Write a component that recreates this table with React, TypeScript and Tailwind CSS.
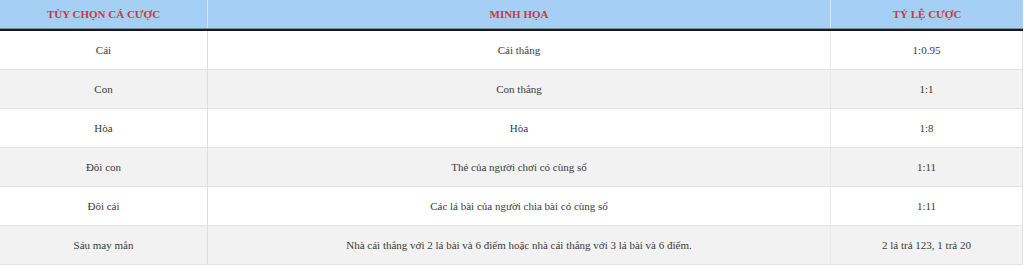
import React from "react";

const rows: [string, string, string][] = [
  ["Cái", "Cái thắng", "1:0.95"],
  ["Con", "Con thắng", "1:1"],
  ["Hòa", "Hòa", "1:8"],
  ["Đôi con", "Thẻ của người chơi có cùng số", "1:11"],
  ["Đôi cái", "Các lá bài của người chia bài có cùng số", "1:11"],
  ["Sáu may mắn", "Nhà cái thắng với 2 lá bài và 6 điểm hoặc nhà cái thắng với 3 lá bài và 6 điểm.", "2 lá trả 123, 1 trả 20"],
];

export default function App() {
  return (
    <div className="w-[1024px] h-[265px] bg-white overflow-hidden font-['Liberation_Serif','Times_New_Roman',serif]">
      <div className="w-[1023px] flex flex-col">
        <div className="grid grid-cols-[208px_623px_1fr] h-[28px] bg-[#a6cff5] text-[11px] font-bold text-[#d0353b] uppercase">
          <div className="flex items-center justify-center border-r border-[#d7e6f6]">Tùy chọn cá cược</div>
          <div className="flex items-center justify-center border-r border-[#d7e6f6]">Minh họa</div>
          <div className="flex items-center justify-center">Tỷ lệ cược</div>
        </div>
        <div className="h-px bg-[#7f8fa0]" />
        <div className="h-[2px] bg-[#1a1a1a]" />
        {rows.map((r, i) => (
          <div
            key={i}
            className={`grid grid-cols-[208px_623px_1fr] h-[39px] border-b border-[#e3e3e3] text-[11px] text-[#3a3a3a] ${i % 2 === 1 ? "bg-[#f2f2f2]" : "bg-white"}`}
          >
            <div className="flex items-center justify-center border-r border-[#dedcec]">{r[0]}</div>
            <div className="flex items-center justify-center border-r border-[#ebebeb]">{r[1]}</div>
            <div className="flex items-center justify-center border-r border-[#e3e3e3]">{r[2]}</div>
          </div>
        ))}
      </div>
    </div>
  );
}
